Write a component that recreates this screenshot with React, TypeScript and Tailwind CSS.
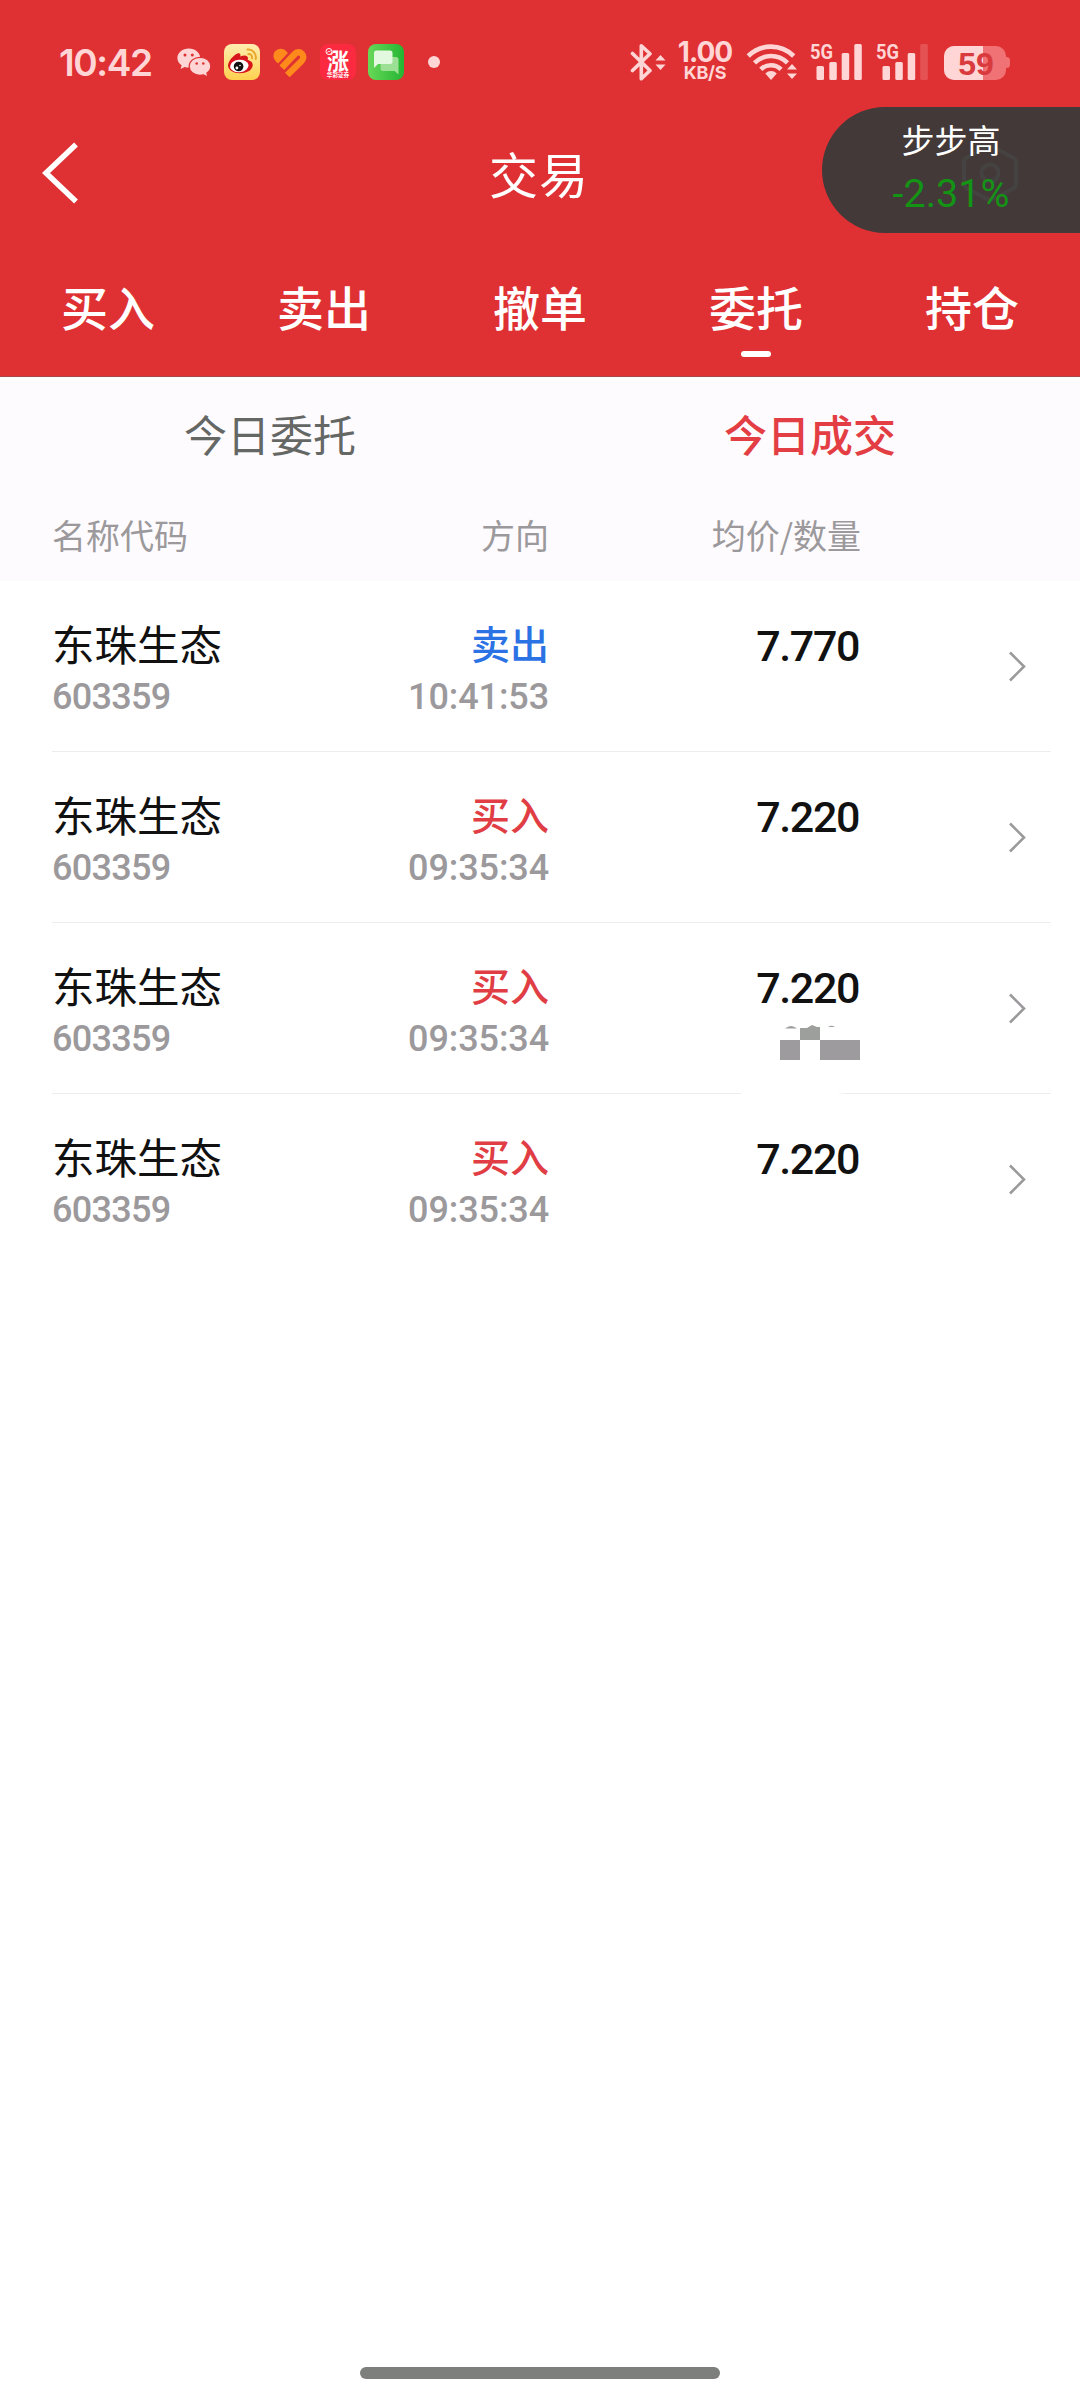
import { ReactNode } from 'react';
import clsx from 'clsx';

const tabs = ['买入', '卖出', '撤单', '委托', '持仓'];

type Trade = {
  name: string;
  code: string;
  side: 'buy' | 'sell';
  time: string;
  price: string;
  masked?: boolean;
};

const trades: Trade[] = [
  { name: '东珠生态', code: '603359', side: 'sell', time: '10:41:53', price: '7.770' },
  { name: '东珠生态', code: '603359', side: 'buy', time: '09:35:34', price: '7.220' },
  { name: '东珠生态', code: '603359', side: 'buy', time: '09:35:34', price: '7.220', masked: true },
  { name: '东珠生态', code: '603359', side: 'buy', time: '09:35:34', price: '7.220' },
];

function WechatIcon() {
  return (
    <svg className="w-[34px] h-[30px] ml-[26px]" viewBox="0 0 34 30">
      <path
        fill="#ffd5d6"
        d="M11.800 1.500C5.500 1.500.4 5.700.4 11c0 3 1.600 5.600 4.200 7.300L3.600 22l4.100-2.100c1.300.4 2.600.6 4.100.6 6.400 0 11.400-4.200 11.400-9.500S18.100 1.500 11.800 1.500Z"
      />
      <path
        fill="#ffd5d6"
        stroke="#df3133"
        strokeWidth="1.200"
        d="M23 10.300c-6 0-10.800 3.900-10.800 9s4.800 9 10.800 9c1.200 0 2.400-.2 3.500-.5l4.300 2.200-.9-3.900c2.300-1.600 3.900-3.900 3.900-6.800 0-5.100-4.800-9-10.800-9Z"
      />
      <g fill="#df3133">
        <circle cx="8" cy="8" r="1.500" />
        <circle cx="15.300" cy="8" r="1.500" />
        <circle cx="19.700" cy="16.500" r="1.300" />
        <circle cx="26.300" cy="16.500" r="1.300" />
      </g>
    </svg>
  );
}

function WeiboIcon() {
  return (
    <svg className="w-9 h-9 ml-[13px]" viewBox="0 0 36 36">
      <defs>
        <linearGradient id="weibo" x1="0" y1="0" x2="0" y2="1">
          <stop offset="0" stopColor="#ffeeb0" />
          <stop offset="1" stopColor="#ffd04e" />
        </linearGradient>
      </defs>
      <rect width="36" height="36" rx="8" fill="url(#weibo)" />
      <path
        fill="#d8141c"
        d="M13.500 9.500c2-1 3.500.2 2.800 3 3.500-1.500 7.500-1.800 7.700 1.700 0 .8-.3 1.500-.3 1.800 2.800.6 5.300 2.400 5 5.500-.6 5-6.400 7.700-12.700 7.700C9.400 29.200 4 26 4 21.500c0-4 5.500-10.500 9.500-12Z"
      />
      <ellipse cx="15.300" cy="22" rx="9.300" ry="6.300" fill="#fff" transform="rotate(-6 15.300 22)" />
      <circle cx="14.600" cy="22.500" r="4.800" fill="#111" />
      <circle cx="12.900" cy="24" r="1.400" fill="#fff" />
      <circle cx="16" cy="21.500" r=".8" fill="#fff" />
      <g fill="none" stroke="#e9a72c" strokeWidth="2" strokeLinecap="round">
        <path d="M23.500 5.600c5.200-.6 9.200 4 8.200 9.500" />
        <path d="M24.300 10c2.600-.2 4.200 1.800 3.700 4.200" />
      </g>
    </svg>
  );
}

function HeartIcon() {
  return (
    <svg className="w-[34px] h-[30px] ml-[13px]" viewBox="0 0 34 30">
      <path fill="#ff8a1c" d="M2.700 14.200C-.3 11-.2 6.500 2.700 3.800s7.500-2.700 10.300.2l1.900 2L5.100 16.600Z" />
      <path
        d="M8.800 20.800 21.600 7.300c2.300-2.400 5.200-2.600 7.200-.6s2 5.100-.2 7.300L14.300 28"
        fill="none"
        stroke="#ff8a1c"
        strokeWidth="6.500"
      />
    </svg>
  );
}

function StockIcon() {
  return (
    <svg className="w-9 h-9 ml-[13px] overflow-visible" viewBox="0 0 36 36">
      <rect width="36" height="36" rx="8" fill="#fb2a41" />
      <g fill="#fff" fontFamily="'Noto Sans CJK SC', sans-serif" textAnchor="middle">
        <text x="18" y="24.500" fontSize="22" fontWeight="700">涨</text>
        <text x="18" y="33" fontSize="5.600" fontWeight="700">华彩证券</text>
      </g>
      <circle cx="9" cy="7.500" r="3" fill="#fb2a41" stroke="#fff" strokeWidth="1" />
      <path d="m7.500 8.500 1-1.500 1 1 1-1.500" fill="none" stroke="#fff" strokeWidth=".8" />
    </svg>
  );
}

function MessageIcon() {
  return (
    <svg className="w-9 h-9 ml-3" viewBox="0 0 36 36">
      <defs>
        <linearGradient id="msg" x1="0" y1="0" x2="1" y2="0">
          <stop offset="0" stopColor="#68d858" />
          <stop offset="1" stopColor="#24b532" />
        </linearGradient>
      </defs>
      <rect width="36" height="36" rx="8" fill="url(#msg)" />
      <path fill="#9be094" d="M13 13h15a2.500 2.500 0 0 1 2.500 2.500v15L26.500 27H15a2.500 2.500 0 0 1-2.500-2.500Z" />
      <path fill="#e2f8df" d="M8.500 6.500H22A2.500 2.500 0 0 1 24.500 9v8.500A2.500 2.500 0 0 1 22 20H10l-4 4V9a2.500 2.500 0 0 1 2.500-2.500Z" />
    </svg>
  );
}

function BluetoothIcon() {
  return (
    <svg className="w-[36px] h-[38px]" viewBox="0 0 36 38">
      <path
        d="m2.500 10.500 17.500 17-8.700 8.200V2.800l8.700 8L2.500 27.500"
        fill="none"
        stroke="#ffd5d6"
        strokeWidth="3.600"
        strokeLinejoin="round"
        strokeLinecap="round"
      />
      <path d="m25.500 17.500 5-5.500 5 5.500ZM25.500 21.500l5 5.500 5-5.500Z" fill="#ffd5d6" />
    </svg>
  );
}

function WifiIcon() {
  return (
    <svg className="w-[52px] h-[38px] ml-[13px]" viewBox="0 0 52 38">
      <g fill="none" stroke="#ffd5d6" strokeWidth="4.600">
        <path d="M2.200 13c13-12.500 32.500-12.500 45.500 0" />
        <path d="M8.500 19.800c9.500-9 23.500-9 33 0" />
        <path d="M14.800 26.300c5.700-5.500 14.600-5.500 20.300 0" />
      </g>
      <path d="M19.300 30.500c3.300-3.300 8.200-3.300 11.500 0L25 37Z" fill="#ffd5d6" />
      <path d="m41 26.500 5-5.500 5 5.500ZM41 30.500l5 5.500 5-5.500Z" fill="#ffd5d6" />
    </svg>
  );
}

function SignalIcon({ weak }: { weak?: boolean }) {
  return (
    <svg className={clsx('w-[52px] h-[38px] overflow-visible', weak ? 'ml-[14px]' : 'ml-3')} viewBox="0 0 52 38">
      <text x="0" y="15.800" fontSize="21" fontWeight="700" fill="#ffd5d6" fontFamily="Roboto, sans-serif" textLength="23" lengthAdjust="spacingAndGlyphs">
        5G
      </text>
      <g fill="#ffd5d6">
        <rect x="6.500" y="23" width="7.500" height="14" rx="1.500" />
        <rect x="19.300" y="19" width="7.500" height="18" rx="1.500" />
        <rect x="31.700" y="10" width="7.500" height="27" rx="1.500" />
        <rect x="44.300" y="1" width="7.500" height="36" rx="1.500" opacity={weak ? 0.2 : 1} />
      </g>
    </svg>
  );
}

function BatteryIcon() {
  return (
    <svg className="w-[68px] h-[38px] ml-[15px]" viewBox="0 0 68 38">
      <path d="M62 14h1.500a3.500 3.500 0 0 1 3.500 3.500v4a3.500 3.500 0 0 1-3.500 3.500H62Z" fill="#f07274" />
      <rect x="1" y="3" width="62" height="34" rx="10" fill="#f07274" />
      <path d="M40 3H11A10 10 0 0 0 1 13v14a10 10 0 0 0 10 10h29Z" fill="#ffd5d6" />
      <text x="33" y="31.500" fontSize="32" fontWeight="700" fill="#d93a3d" fontFamily="'Liberation Sans', sans-serif" textAnchor="middle">
        59
      </text>
    </svg>
  );
}

function StatusBar() {
  return (
    <div className="h-[100px] pt-[24px] pl-[59px] pr-[69px] flex items-center justify-between">
      <div className="flex items-center">
        <span className="w-[92px] font-[Inter] text-[37px] leading-none font-semibold tracking-[-1.4px] text-[#ffd5d6]">10:42</span>
        <WechatIcon />
        <WeiboIcon />
        <HeartIcon />
        <StockIcon />
        <MessageIcon />
        <span className="size-3 ml-6 rounded-full bg-[#ffd5d6]" />
      </div>
      <div className="flex items-center">
        <BluetoothIcon />
        <div className="w-[56px] ml-[11px] flex flex-col items-center font-[Inter] font-bold text-[#ffd5d6]">
          <span className="text-[28px] leading-[21px] tracking-[-1px]">1.00</span>
          <span className="text-[18px] leading-[19px] tracking-[-0.3px]">KB/S</span>
        </div>
        <WifiIcon />
        <SignalIcon />
        <SignalIcon weak />
        <BatteryIcon />
      </div>
    </div>
  );
}

// Floating quote bubble docked to the right edge
function QuoteBubble() {
  return (
    <div className="absolute right-0 top-[107px] w-[258px] h-[126px] rounded-l-full bg-[#433939] flex flex-col items-center overflow-hidden">
      <svg className="absolute left-[138px] top-[34px] w-[60px] h-[64px]" viewBox="0 0 60 64" fill="none" stroke="#454341" strokeWidth="4">
        <path d="M26 6.500a8 8 0 0 1 8 0l19 10a6 6 0 0 1 3 5v21a6 6 0 0 1-3 5l-19 10a8 8 0 0 1-8 0l-19-10a6 6 0 0 1-3-5v-21a6 6 0 0 1 3-5Z" />
        <circle cx="30" cy="32" r="8.500" />
      </svg>
      <span className="relative mt-[10px] text-[33px] leading-[44px] text-white">步步高</span>
      <span className="relative mt-[11px] font-[Roboto] text-[39.500px] leading-[44px] text-[#149415]">-2.31%</span>
    </div>
  );
}

function Cell({ children, className }: { children: ReactNode; className?: string }) {
  return <div className={clsx('flex flex-col', className)}>{children}</div>;
}

function TradeRow({ trade, last }: { trade: Trade; last: boolean }) {
  return (
    <div className={clsx('relative ml-[52px] mr-[29px] h-[171px] pt-[35px] grid grid-cols-[248px_249px_312px_1fr] border-b', last ? 'border-transparent' : 'border-[#ededed]')}>
      <Cell>
        <span className="text-[42.500px] leading-[53px] text-[#111]">{trade.name}</span>
        <span className="mt-px font-[Roboto] text-[36px] leading-[54px] font-medium tracking-[-0.7px] text-[#9b999b]">{trade.code}</span>
      </Cell>
      <Cell className="items-end">
        <span className={clsx('text-[39px] leading-[53px] font-medium', trade.side === 'buy' ? 'text-[#e03e44]' : 'text-[#2b72e4]')}>
          {trade.side === 'buy' ? '买入' : '卖出'}
        </span>
        <span className="mt-px font-[Roboto] text-[36px] leading-[54px] font-medium tracking-[-0.1px] text-[#9b999b]">{trade.time}</span>
      </Cell>
      <Cell className="items-end">
        <span className="font-[Roboto] text-[43px] leading-[61px] font-medium tracking-[-1.4px] -mr-px pr-[3px] text-[#111]">{trade.price}</span>
      </Cell>
      <svg className="absolute right-[24px] top-[69px] w-[20px] h-[33px]" viewBox="0 0 20 33">
        <path d="m3 2.500 14 14-14 14" fill="none" stroke="#9b999b" strokeWidth="2.600" />
      </svg>
      {trade.masked && (
        <>
          <svg className="absolute left-[728px] top-[102px] w-[80px] h-[35px]" viewBox="0 0 80 35">
            <path d="M5 3.500Q11-1.500 17 3.500ZM48 2q3.500-2.500 7 0Z" fill="#9d9f9c" />
            <path d="M20 3h7l5-3 5 2h3v13H20Z" fill="#9d9f9c" />
            <path d="M0 15h20v20H0ZM40 15h40v20H40Z" fill="#9e9b9f" />
          </svg>
          <div className="absolute left-[689px] -bottom-px w-[106px] h-px bg-linear-to-r from-white from-90% to-transparent" />
        </>
      )}
    </div>
  );
}

export default function App() {
  return (
    <div className="relative w-[1080px] h-[2400px] overflow-hidden bg-white font-['Noto_Sans_CJK_SC',sans-serif] flex flex-col">
      <header className="h-[377px] bg-[#df3133] text-white border-b border-[#a8474a]">
        <StatusBar />

        <div className="h-[146px] flex items-center">
          <svg className="w-10 h-[64px] ml-10" viewBox="0 0 40 64">
            <path d="M36 3.500 6 32l30 28.500" fill="none" stroke="#fff" strokeWidth="5.500" />
          </svg>
          <h1 className="w-[918px] text-center text-[49px] leading-[60px] tracking-[1px]">交易</h1>
        </div>

        <nav className="h-[130px] pt-[27px] grid grid-cols-5">
          {tabs.map((tab) => (
            <div key={tab} className="flex flex-col items-center">
              <span className="text-[47px] leading-[66px] font-medium">{tab}</span>
              {tab === '委托' && <span className="mt-3 w-[30px] h-[6px] rounded-full bg-white" />}
            </div>
          ))}
        </nav>
      </header>

      <section className="h-[204px] bg-[#fefbff]">
        <div className="h-[111px] grid grid-cols-2 items-center text-center text-[43px] leading-[60px]">
          <span className="text-[#656765]">今日委托</span>
          <span className="font-medium text-[#e33e44]">今日成交</span>
        </div>
        <div className="ml-[52px] h-[93px] pt-px grid grid-cols-[248px_249px_312px_1fr] items-center text-[34px] leading-[48px] text-[#9b999b]">
          <span>名称代码</span>
          <span className="text-right">方向</span>
          <span className="text-right">均价/数量</span>
        </div>
      </section>

      <main className="flex-1">
        {trades.map((trade, i) => (
          <TradeRow key={i} trade={trade} last={i === trades.length - 1} />
        ))}
      </main>

      <div className="self-center mb-[21px] w-[360px] h-3 rounded-full bg-[#7d7f7c]" />

      <QuoteBubble />
    </div>
  );
}
